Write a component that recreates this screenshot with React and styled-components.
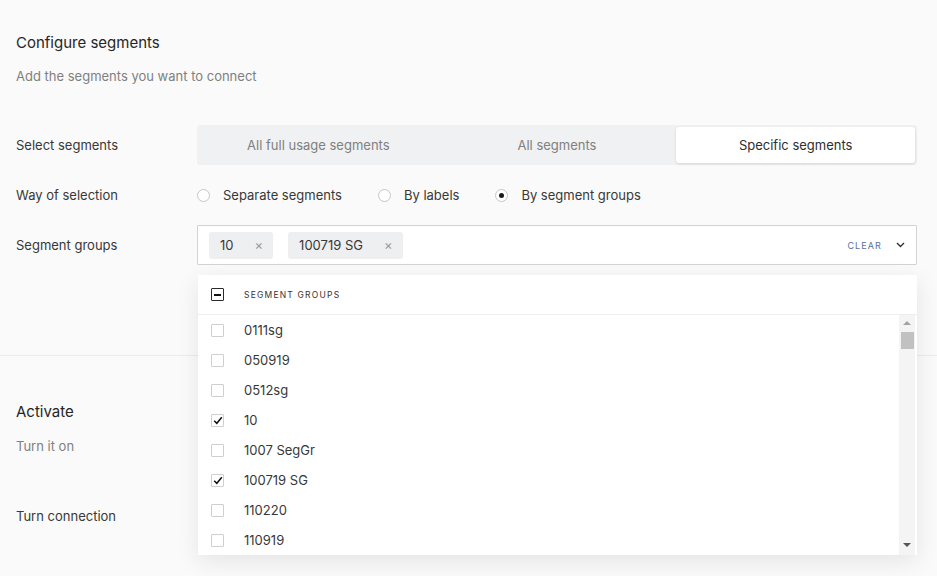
import React from 'react'
import styled, { createGlobalStyle } from 'styled-components'

const GlobalStyle = createGlobalStyle`
  html, body {
    margin: 0;
    padding: 0;
    background: #fafafa;
    font-family: Inter, "Noto Sans", "Liberation Sans", sans-serif;
    color: #2b2b2b;
    -webkit-font-smoothing: antialiased;
  }
  * { box-sizing: border-box; }
`

const Page = styled.div`
  width: 937px;
  height: 576px;
  overflow: hidden;
  background: #fafafa;
`

const Section = styled.section`
  padding: ${p => p.$pad || '0 20px 0 16px'};
  border-bottom: ${p => (p.$divider ? '1px solid #ececec' : 'none')};
`

const Title = styled.h2`
  margin: 0;
  font-size: 15px;
  font-weight: 400;
  line-height: 20px;
  color: #262626;
`

const Subtitle = styled.p`
  margin: ${p => p.$mt || '14px'} 0 0;
  font-size: 13px;
  line-height: 18px;
  color: #808080;
`

const Form = styled.div`
  display: flex;
  flex-direction: column;
  gap: 10px;
  margin-top: 40px;
`

const Row = styled.div`
  display: grid;
  grid-template-columns: 181px 720px;
  align-items: center;
  min-height: 40px;
`

const Label = styled.div`
  font-size: 13px;
  color: #383838;
  margin-top: ${p => p.$mt || '0'};
`

const Segmented = styled.div`
  display: grid;
  grid-template-columns: repeat(3, 1fr);
  height: 40px;
  padding: 2px;
  background: #f0f1f3;
  border-radius: 3px;
`

const SegTab = styled.div`
  display: flex;
  align-items: center;
  justify-content: center;
  font-size: 13px;
  border-radius: 3px;
  color: ${p => (p.$active ? '#2e2e2e' : '#808080')};
  background: ${p => (p.$active ? '#fff' : 'transparent')};
  box-shadow: ${p => (p.$active ? '0 1px 3px rgba(0,0,0,0.12)' : 'none')};
`

const Radios = styled.div`
  display: flex;
  align-items: center;
  gap: 36px;
`

const RadioOption = styled.label`
  display: flex;
  align-items: center;
  gap: 13px;
  font-size: 13px;
  color: #383838;
`

const RadioCircle = styled.span`
  width: 13px;
  height: 13px;
  border-radius: 50%;
  border: 1px solid #c6c6c6;
  background: #fff;
  display: flex;
  align-items: center;
  justify-content: center;

  &::after {
    content: '';
    width: 5px;
    height: 5px;
    border-radius: 50%;
    background: #1a1a1a;
    display: ${p => (p.$checked ? 'block' : 'none')};
  }
`

const SelectWrap = styled.div`
  position: relative;
`

const SelectBox = styled.div`
  display: flex;
  align-items: center;
  height: 40px;
  padding: 0 11px 0 11px;
  background: #fff;
  border: 1px solid #d3d3d3;
  border-radius: 1px;
`

const Tags = styled.div`
  display: flex;
  gap: 15px;
  flex: 1;
`

const Tag = styled.span`
  display: flex;
  align-items: center;
  height: 27px;
  padding: 0 10px 0 11px;
  background: #eeeff1;
  border-radius: 3px;
  font-size: 13px;
  color: #383838;
`

const TagClose = styled.span`
  margin-left: 21px;
  font-size: 13px;
  color: #9a9a9a;
`

const ClearBtn = styled.span`
  font-size: 9px;
  letter-spacing: 1.1px;
  color: #5c6f96;
  margin-right: 14px;
`

const Dropdown = styled.div`
  position: absolute;
  top: 50px;
  left: 1px;
  width: 719px;
  background: #fff;
  box-shadow: 0 6px 22px rgba(0, 0, 0, 0.09);
  z-index: 5;
`

const DropHeader = styled.div`
  display: flex;
  align-items: center;
  gap: 20px;
  height: 40px;
  padding-left: 13px;
  border-bottom: 1px solid #eeeeee;
  font-size: 8.5px;
  letter-spacing: 1.2px;
  color: #333;
`

const ListArea = styled.div`
  display: flex;
  height: 240px;
`

const List = styled.div`
  flex: 1;
`

const Item = styled.div`
  display: flex;
  align-items: center;
  gap: 20px;
  height: 30px;
  padding-left: 13px;
  font-size: 13px;
  color: #383838;
`

const Box = styled.span`
  width: 13px;
  height: 13px;
  border: 1px solid ${p => (p.$dark ? '#2a2a2a' : '#cfcfcf')};
  border-radius: 1px;
  background: #fff;
  display: flex;
  align-items: center;
  justify-content: center;
  flex-shrink: 0;
`

const Scrollbar = styled.div`
  width: 16px;
  margin-right: 2px;
  background: #f4f4f4;
  display: flex;
  flex-direction: column;
  align-items: center;
`

const ScrollArrow = styled.span`
  width: 0;
  height: 0;
  border-left: 4px solid transparent;
  border-right: 4px solid transparent;
  ${p => (p.$down
    ? 'border-top: 4px solid #555; margin-top: auto; margin-bottom: 8px;'
    : 'border-bottom: 4px solid #a3a3a3; margin-top: 6px;')}
`

const Thumb = styled.span`
  width: 13px;
  height: 17px;
  margin-top: 7px;
  background: #c1c1c1;
`

const Check = () => (
  <svg width="10" height="9" viewBox="0 0 10 9">
    <path d="M1.2 4.8 L3.8 7.3 L8.8 1.3" fill="none" stroke="#111" strokeWidth="1.5" />
  </svg>
)

const Chevron = () => (
  <svg width="9" height="6" viewBox="0 0 9 6">
    <path d="M1 1 L4.5 4.5 L8 1" fill="none" stroke="#333" strokeWidth="1.4" />
  </svg>
)

const groups = [
  { name: '0111sg' },
  { name: '050919' },
  { name: '0512sg' },
  { name: '10', checked: true },
  { name: '1007 SegGr' },
  { name: '100719 SG', checked: true },
  { name: '110220' },
  { name: '110919' },
]

const App = () => (
  <Page>
    <GlobalStyle />
    <Section $divider $pad="33px 20px 90px 16px">
      <Title>Configure segments</Title>
      <Subtitle>Add the segments you want to connect</Subtitle>
      <Form>
        <Row>
          <Label>Select segments</Label>
          <Segmented>
            <SegTab>All full usage segments</SegTab>
            <SegTab>All segments</SegTab>
            <SegTab $active>Specific segments</SegTab>
          </Segmented>
        </Row>
        <Row>
          <Label>Way of selection</Label>
          <Radios>
            <RadioOption><RadioCircle />Separate segments</RadioOption>
            <RadioOption><RadioCircle />By labels</RadioOption>
            <RadioOption><RadioCircle $checked />By segment groups</RadioOption>
          </Radios>
        </Row>
        <Row>
          <Label>Segment groups</Label>
          <SelectWrap>
            <SelectBox>
              <Tags>
                <Tag>10<TagClose>×</TagClose></Tag>
                <Tag>100719 SG<TagClose>×</TagClose></Tag>
              </Tags>
              <ClearBtn>CLEAR</ClearBtn>
              <Chevron />
            </SelectBox>
            <Dropdown>
              <DropHeader>
                <Box $dark>
                  <svg width="7" height="2" viewBox="0 0 7 2"><rect width="7" height="2" fill="#111" /></svg>
                </Box>
                SEGMENT GROUPS
              </DropHeader>
              <ListArea>
                <List>
                  {groups.map(g => (
                    <Item key={g.name}>
                      <Box>{g.checked && <Check />}</Box>
                      {g.name}
                    </Item>
                  ))}
                </List>
                <Scrollbar>
                  <ScrollArrow />
                  <Thumb />
                  <ScrollArrow $down />
                </Scrollbar>
              </ListArea>
            </Dropdown>
          </SelectWrap>
        </Row>
      </Form>
    </Section>
    <Section $pad="46px 20px 0 16px">
      <Title>Activate</Title>
      <Subtitle $mt="15px">Turn it on</Subtitle>
      <Label $mt="53px">Turn connection</Label>
    </Section>
  </Page>
)

export default App
